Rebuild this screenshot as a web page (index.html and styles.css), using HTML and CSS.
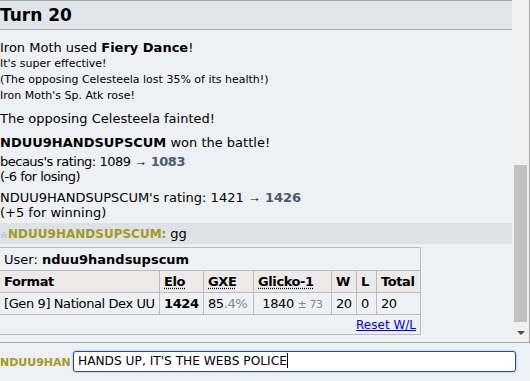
FILE: index.html
```html
<!DOCTYPE html>
<html lang="en">
<head>
  <meta charset="UTF-8" />
  <meta name="viewport" content="width=device-width, initial-scale=1.0" />
  <title>Battle log</title>
  <link rel="stylesheet" href="styles.css">
</head>
<body>
  <div class="room">
    <div class="log-row">
      <div class="log">
        <h2 class="turn">Turn 20</h2>
        <div class="line first">Iron Moth used <strong>Fiery Dance</strong>!</div>
        <div class="line small">It's super effective!</div>
        <div class="line small">(The opposing Celesteela lost 35% of its health!)</div>
        <div class="line small">Iron Moth's Sp. Atk rose!</div>
        <div class="line gap">The opposing Celesteela fainted!</div>
        <div class="line gap"><strong>NDUU9HANDSUPSCUM</strong> won the battle!</div>
        <div class="rating">
          <div class="tight">becaus's rating: 1089 <span class="arr">&rarr;</span> <strong class="new">1083</strong></div>
          <div class="tight">(-6 for losing)</div>
        </div>
        <div class="rating second">
          <div>NDUU9HANDSUPSCUM's rating: 1421 <span class="arr">&rarr;</span> <strong class="new">1426</strong></div>
          <div>(+5 for winning)</div>
        </div>
        <div class="chat"><span class="star">&#9734;</span><strong class="name">NDUU9HANDSUPSCUM:</strong> <em>gg</em></div>
        <div class="ladder">
          <div class="user">User: <strong>nduu9handsupscum</strong></div>
          <table>
            <tr>
              <th class="c-format">Format</th>
              <th class="c-elo"><abbr>Elo</abbr></th>
              <th class="c-gxe"><abbr>GXE</abbr></th>
              <th class="c-glicko"><abbr>Glicko-1</abbr></th>
              <th class="c-w">W</th>
              <th class="c-l">L</th>
              <th class="c-total">Total</th>
            </tr>
            <tr>
              <td>[Gen 9] National Dex UU</td>
              <td><strong>1424</strong></td>
              <td>85<span class="dim">.4%</span></td>
              <td class="mid">1840 <small class="dim">&plusmn; 73</small></td>
              <td>20</td>
              <td>0</td>
              <td>20</td>
            </tr>
          </table>
          <div class="reset"><a href="#">Reset W/L</a></div>
        </div>
      </div>
      <div class="scrollbar">
        <div class="thumb"></div>
        <div class="arrow"></div>
      </div>
    </div>
    <div class="chatbox">
      <div class="chat-name">NDUU9HANDSUPSCUM</div>
      <div class="input">HANDS UP, IT'S THE WEBS POLICE<span class="caret"></span></div>
    </div>
  </div>
</body>
</html>
```

FILE: styles.css
```css
body { margin: 0; font-family: "DejaVu Sans", Verdana, sans-serif; color: #000; background: #edf1f4; }
.room { width: 530px; height: 381px; overflow: hidden; }
.log-row { display: flex; height: 343px; border-bottom: 1px solid #a8a8a8; box-sizing: border-box; }
.log { width: 512px; overflow: hidden; background: #edf1f4; font-size: 13px; }

.turn {
  margin: 0;
  height: 30px;
  box-sizing: border-box;
  padding: 4px 0 0 0;
  font-size: 17px;
  line-height: 20px;
  background: #dfe6ea;
  border-top: 1px solid #a8a8a8;
  border-bottom: 1px solid #a8a8a8;
}

.line { line-height: 16px; white-space: nowrap; }
.line.first { margin-top: 10px; }
.line.small { font-size: 11px; }
.line.gap { margin-top: 7px; }
.line.gap + .line.gap { margin-top: 8px; }

.rating { line-height: 15px; margin-top: 3px; white-space: nowrap; }
.rating.second { margin-top: 6px; }
.tight { letter-spacing: -0.5px; }
.arr { font-family: "Liberation Sans", sans-serif; font-size: 13px; letter-spacing: 0; }
.new { color: #475b6f; }

.chat {
  margin-top: 3px;
  height: 21px;
  line-height: 21px;
  font-size: 12px;
  background: #dde2e5;
  white-space: nowrap;
}
.star { font-size: 9px; color: #777; }
.name { color: #a39a1f; }
.chat em { font-style: normal; font-size: 13px; }

.ladder {
  margin-top: 3px;
  width: 421px;
  height: 88px;
  box-sizing: border-box;
  border: 1px solid #bbb;
  border-left: none;
}
.user { padding: 3px 0 0 4px; height: 19px; line-height: 18px; }
table {
  border-collapse: collapse;
  table-layout: fixed;
  width: 420px;
  font-size: 13px;
  letter-spacing: -0.4px;
}
th, td {
  border: 1px solid #bbb;
  padding: 0 4px;
  height: 21px;
  text-align: left;
  white-space: nowrap;
  overflow: hidden;
}
th { background: #ece9e8; }
th:first-child, td:first-child { border-left: none; }
th:last-child, td:last-child { border-right: none; }
abbr { text-decoration: underline dotted; text-underline-offset: 2px; }
.c-format { width: 151px; }
.c-elo { width: 35px; }
.c-gxe { width: 41px; }
.c-glicko { width: 69px; }
.c-w { width: 16px; }
.c-l { width: 11px; }
.c-total { width: 35px; }
.mid { text-align: center; }
.dim { color: #888; }
small.dim { font-size: 11px; }
.reset { text-align: right; font-size: 12px; padding: 3px 4px 0 0; }
.reset a { color: #00e; }

.scrollbar {
  width: 17px;
  background: #f0f0f0;
  border-right: 1px solid #a8a8a8;
  display: flex;
  flex-direction: column;
  align-items: center;
}
.thumb { width: 13px; height: 157px; margin-top: 165px; background: #c1c1c1; }
.arrow {
  margin-top: 9px;
  width: 0;
  height: 0;
  border-left: 4px solid transparent;
  border-right: 4px solid transparent;
  border-top: 4px solid #505050;
}

.chatbox { display: flex; align-items: flex-start; padding-top: 8px; height: 38px; box-sizing: border-box; }
.chat-name {
  width: 70px;
  overflow: hidden;
  white-space: nowrap;
  color: #a39a1f;
  font-weight: bold;
  font-size: 11px;
  line-height: 21px;
  margin-right: 3px;
  margin-top: 1px;
}
.input {
  width: 443px;
  height: 21px;
  box-sizing: border-box;
  border: 1px solid #1f4f8f;
  border-radius: 3px;
  box-shadow: 0 0 2px #6a9be0;
  background: #fff;
  padding: 0 4px;
  font-size: 12.2px;
  line-height: 19px;
  white-space: nowrap;
}
.caret { display: inline-block; width: 1px; height: 15px; background: #000; vertical-align: -3px; }
```
